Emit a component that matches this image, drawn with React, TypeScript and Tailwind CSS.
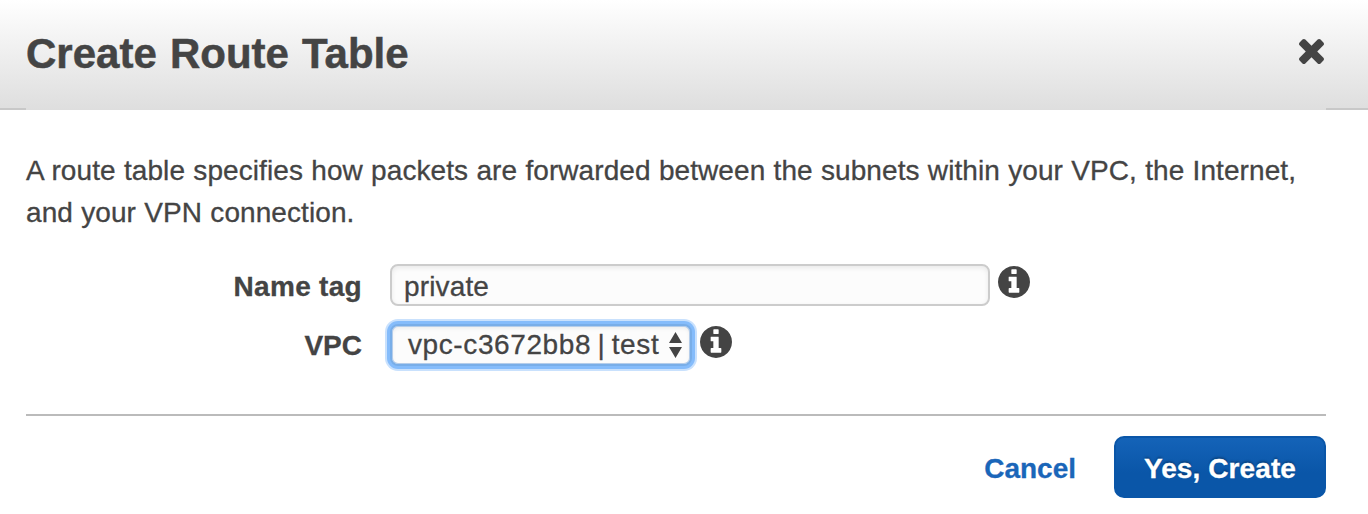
function InfoIcon() {
  return (
    <svg viewBox="128 128 1536 1536" className="size-8 shrink-0 fill-[#444444]" aria-hidden="true">
      <path d="M1152 1376v-160q0-14-9-23t-23-9h-96v-512q0-14-9-23t-23-9h-320q-14 0-23 9t-9 23v160q0 14 9 23t23 9h96v320h-96q-14 0-23 9t-9 23v160q0 14 9 23t23 9h448q14 0 23-9t9-23zm-128-896v-160q0-14-9-23t-23-9h-192q-14 0-23 9t-9 23v160q0 14 9 23t23 9h192q14 0 23-9t9-23zm640 416q0 209-103 385.5t-279.5 279.5-385.5 103-385.5-103-279.5-279.5-103-385.5 103-385.5 279.5-279.5 385.5-103 385.5 103 279.5 279.5 103 385.5z" />
    </svg>
  );
}

function CloseIcon() {
  return (
    <svg viewBox="302 366 1188 1188" className="size-[25px] fill-[#444444]" aria-hidden="true">
      <path d="M1490 1322q0 40-28 68l-136 136q-28 28-68 28t-68-28l-294-294-294 294q-28 28-68 28t-68-28l-136-136q-28-28-28-68t28-68l294-294-294-294q-28-28-28-68t28-68l136-136q28-28 68-28t68 28l294 294 294-294q28-28 68-28t68 28l136 136q28 28 28 68t-28 68l-294 294 294 294q28 28 28 68z" />
    </svg>
  );
}

export default function App() {
  return (
    <div className="flex h-[514px] w-[1368px] flex-col overflow-hidden bg-white font-['Liberation_Sans',Arial,sans-serif] text-[28px] text-[#444444] [-webkit-text-stroke:0.3px_currentColor]">
      <header className="flex h-[110px] shrink-0 flex-col bg-linear-to-b from-white to-[#dedede]">
        <div className="flex h-[108px] items-center justify-between pr-11 pl-[26px]">
          <h1 className="text-[42px] leading-[48px] font-bold whitespace-nowrap [word-spacing:1.5px] [-webkit-text-stroke:0.5px_currentColor]">
            Create Route Table
          </h1>
          <button type="button" aria-label="Close" className="-mt-[5px]">
            <CloseIcon />
          </button>
        </div>
        <div className="flex h-0.5 justify-between">
          <span className="w-[26px] bg-[#c8c8c8]" />
          <span className="w-[42px] bg-[#c8c8c8]" />
        </div>
      </header>

      <main className="flex h-[306px] shrink-0 flex-col px-[26px] pt-10">
        <p className="leading-[42px] tracking-[0.08px] whitespace-nowrap [word-spacing:0.4px]">
          A route table specifies how packets are forwarded between the subnets within your VPC, the Internet,
          <br />
          and your VPN connection.
        </p>
        <div className="mt-[30px] flex h-[42px]">
          <label className="w-[336px] pt-0.5 text-right leading-[42px] font-bold tracking-[0.3px]">Name tag</label>
          <div className="ml-7 flex h-[42px] w-[600px] items-center rounded-lg border-2 border-[#cccccc] bg-[#fcfcfc] px-3 pt-1 tracking-[0.14px] shadow-[inset_0_2px_5px_rgba(0,0,0,0.08)]">
            <span>private</span>
          </div>
          <div className="ml-2 pt-0.5">
            <InfoIcon />
          </div>
        </div>
        <div className="mt-[18px] flex h-[42px]">
          <label className="w-[336px] pt-px text-right leading-[42px] font-bold">VPC</label>
          <div className="ml-7 flex h-[42px] w-[302px] items-center justify-between rounded-lg border-2 border-[#79aee8] bg-[#fcfcfc] pr-2 pl-4 shadow-[inset_0_0_0_1px_#b5cdea,inset_0_2px_4px_rgba(0,0,0,0.08),0_0_0_3px_#85bcfb,0_0_0_5px_#c9e1fd]">
            <span className="tracking-[0.6px] whitespace-nowrap [word-spacing:-2px]">vpc-c3672bb8 | test</span>
            <svg viewBox="0 0 13 26" className="h-[26px] w-[13px] fill-[#444444]" aria-hidden="true">
              <path d="M6.5 0 13 11H0zM6.5 26 0 15h13z" />
            </svg>
          </div>
          <div className="ml-2 pt-0.5">
            <InfoIcon />
          </div>
        </div>
      </main>

      <footer className="mr-[42px] ml-[26px] -mt-0.5 flex items-start justify-end border-t-2 border-[#bbbbbb] pt-5">
        <button type="button" className="h-[62px] pt-[3px] font-bold text-[#1a66b9]">
          Cancel
        </button>
        <button
          type="button"
          className="ml-[38px] h-[62px] w-[212px] rounded-[10px] border-2 border-[#0a56a8] bg-linear-to-b from-[#1463b8] to-[#0a56a8] to-60% pt-[3px] font-bold tracking-[0.1px] whitespace-nowrap text-white [text-shadow:0_-2px_2px_rgba(0,0,0,0.25)]"
        >
          Yes, Create
        </button>
      </footer>
    </div>
  );
}
